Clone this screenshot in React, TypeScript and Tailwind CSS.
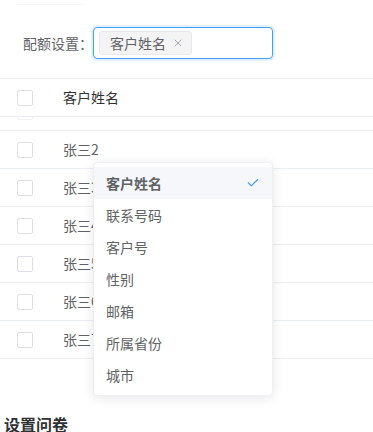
import { Check, X } from "lucide-react";

const rows = ["张三2", "张三3", "张三4", "张三5", "张三6", "张三7"];
const options = ["客户姓名", "联系号码", "客户号", "性别", "邮箱", "所属省份", "城市"];

function Box() {
  return <span className="block w-4 h-4 rounded-[2px] border border-[#dcdfe6] bg-white" />;
}

export default function App() {
  return (
    <div
      className="relative w-[373px] h-[432px] overflow-hidden bg-white text-[14px] text-[#606266]"
      style={{ fontFamily: '"Noto Sans CJK SC", "Noto Sans", sans-serif' }}
    >
      <div className="h-[5px] mx-[17px] w-[68px] border-b border-[#f7f7f7]" />

      {/* Form row */}
      <div className="flex items-center pt-[22px] pl-[23px]">
        <span className="w-[70px] text-[#606266]">配额设置：</span>
        <div className="w-[180px] h-[32px] rounded-[4px] border border-[#409eff] shadow-[0_0_0_2px_rgba(64,158,255,0.15)] flex items-center px-[5px]">
          <span className="h-[24px] flex items-center gap-[6px] pl-[10px] pr-[7px] bg-[#f4f4f5] border border-[#e9e9eb] rounded-[3px] text-[14px]">
            <span className="text-[#606266]">客户姓名</span>
            <X size={12} strokeWidth={1.5} className="text-[#909399]" />
          </span>
        </div>
      </div>

      {/* Table */}
      <div className="mt-[19px] border-t border-[#ebeef5]">
        <div className="h-[38px] flex items-center border-b border-[#ebeef5]">
          <div className="w-[63px] pl-[17px]"><Box /></div>
          <span className="text-[#303133]">客户姓名</span>
        </div>
        <div className="h-[14px] overflow-hidden border-b border-[#ebeef5]">
          <div className="-mt-[24px] h-[37px] flex items-center opacity-40">
            <div className="w-[63px] pl-[17px]"><Box /></div>
          </div>
        </div>
        {rows.map((r) => (
          <div key={r} className="h-[38px] flex items-center border-b border-[#ebeef5]">
            <div className="w-[63px] pl-[17px]"><Box /></div>
            <span>{r}</span>
          </div>
        ))}
      </div>

      <div className="mt-[53px] pl-[4px] text-[16px] font-bold text-[#303133] leading-[24px]">设置问卷</div>

      {/* Dropdown */}
      <div className="absolute left-[93px] top-[162px] w-[180px] py-[4px] bg-white rounded-[4px] border border-[#eef0f3] shadow-[0_2px_12px_rgba(0,0,0,0.1)]">
        {options.map((o, i) => (
          <div
            key={o}
            className={
              i === 0
                ? "h-[32px] flex items-center justify-between px-[12px] bg-[#f5f7fa] font-bold text-[#606266]"
                : "h-[32px] flex items-center px-[12px] text-[#606266]"
            }
          >
            <span>{o}</span>
            {i === 0 && <Check size={14} strokeWidth={2} className="text-[#409eff]" />}
          </div>
        ))}
      </div>
    </div>
  );
}
